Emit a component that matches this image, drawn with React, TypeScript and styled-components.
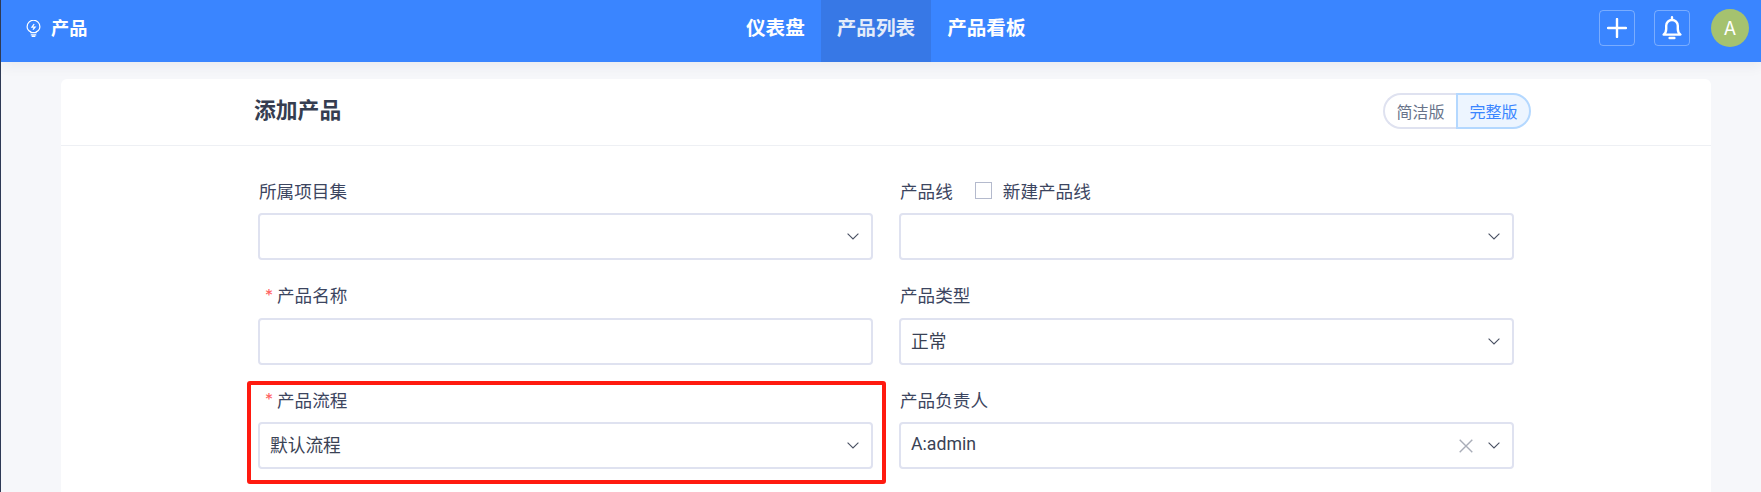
import React from 'react';
import styled, { createGlobalStyle } from 'styled-components';

const Global = createGlobalStyle`
  html, body { margin: 0; padding: 0; height: 100%; overflow: hidden; background: #f5f7fa; }
  body { font-family: Inter, "Noto Sans CJK SC", sans-serif; }
  #root { height: 100%; }
`;

const Page = styled.div`
  height: 492px;
  border-left: 1px solid #2e3a55;
  background: #f6f7fa;
  overflow: hidden;
`;

const TopBar = styled.header`
  height: 62px;
  background: #3a85ff;
  display: flex;
  align-items: stretch;
  color: #fff;
  box-shadow: 0 2px 14px rgba(40, 50, 80, 0.08);
  position: relative;
`;

const Brand = styled.div`
  width: 729px;
  padding-left: 25px;
  box-sizing: border-box;
  display: flex;
  align-items: center;
  gap: 10px;
  font-size: 18.2px;
  font-weight: 700;
  padding-bottom: 8px;
`;

const BrandIcon = styled.svg`
  margin-top: 3px;
`;

const Nav = styled.nav`
  display: flex;
  flex: 1;
`;

const NavItem = styled.div<{ $active?: boolean }>`
  padding: 0 16px 9px;
  display: flex;
  align-items: center;
  font-size: 19.6px;
  font-weight: 700;
  background: ${(p) => (p.$active ? '#3778e6' : 'transparent')};
  color: ${(p) => (p.$active ? '#e4ecfa' : '#fff')};
`;

const Actions = styled.div`
  display: flex;
  align-items: center;
  padding: 0 12px 6px 0;
`;

const IconButton = styled.button`
  width: 36px;
  height: 36px;
  box-sizing: border-box;
  padding: 0;
  margin-right: 19px;
  border: 1px solid rgba(255, 255, 255, 0.32);
  border-radius: 4px;
  background: transparent;
  color: #fff;
  display: flex;
  align-items: center;
  justify-content: center;
`;

const Avatar = styled.div`
  width: 38px;
  height: 38px;
  margin-left: 2px;
  border-radius: 50%;
  background: #a5c26f;
  color: #fff;
  display: flex;
  align-items: center;
  justify-content: center;
  font-size: 18px;
`;

const Card = styled.main`
  margin: 17px 50px 0 60px;
  background: #fff;
  border-radius: 6px 6px 0 0;
  height: 430px;
`;

const CardHead = styled.div`
  height: 67px;
  box-sizing: border-box;
  border-bottom: 1px solid #eef0f4;
  padding: 0 180px 0 193px;
  display: flex;
  align-items: center;
  justify-content: space-between;
`;

const Title = styled.h1`
  margin: -8px 0 0;
  font-size: 21.8px;
  font-weight: 700;
  color: #353d50;
`;

const Toggle = styled.div`
  display: flex;
  height: 36px;
  margin-top: -2px;
`;

const ToggleButton = styled.div<{ $on?: boolean; $side: 'l' | 'r' }>`
  box-sizing: border-box;
  width: ${(p) => (p.$side === 'l' ? 73 : 75)}px;
  display: flex;
  align-items: center;
  justify-content: center;
  font-size: 16px;
  color: ${(p) => (p.$on ? '#3a85ff' : '#68738a')};
  background: ${(p) => (p.$on ? '#edf5ff' : '#fff')};
  border: 2px solid ${(p) => (p.$on ? '#b4d8ff' : '#dfe2f0')};
  border-right-width: ${(p) => (p.$side === 'l' ? 0 : 2)}px;
  border-radius: ${(p) => (p.$side === 'l' ? '18px 0 0 18px' : '0 18px 18px 0')};
`;

const Form = styled.div`
  display: grid;
  grid-template-columns: 615px 615px;
  column-gap: 26px;
  row-gap: 20.5px;
  padding: 30px 0 0 197px;
`;

const Field = styled.div`
  min-width: 0;
`;

const Label = styled.div<{ $required?: boolean }>`
  height: 30px;
  margin-bottom: 7px;
  margin-top: -1px;
  padding-bottom: 1px;
  display: flex;
  align-items: center;
  padding-left: ${(p) => (p.$required ? 7 : 1)}px;
  font-size: 17.6px;
  color: #3c4560;
`;

const Star = styled.span`
  color: #ff5f5f;
  margin-right: 4px;
  font-size: 16px;
`;

const Check = styled.span`
  width: 17px;
  height: 17px;
  box-sizing: border-box;
  border: 1px solid #b4bacd;
  margin: 0 11px 0 22px;
`;

const Control = styled.div`
  height: 47px;
  box-sizing: border-box;
  border: 2px solid #dfe2f0;
  border-radius: 4px;
  display: flex;
  align-items: center;
  padding: 0 12px 0 10px;
  background: #fff;
`;

const Value = styled.span`
  flex: 1;
  font-family: Roboto, "Noto Sans CJK SC", sans-serif;
  font-size: 17.7px;
  color: #3a4254;
  padding-bottom: 3px;
`;

const Clear = styled.svg`
  margin-right: 15px;
`;

const Overlay = styled.div`
  position: absolute;
  left: 247px;
  top: 381px;
  width: 639px;
  height: 103px;
  box-sizing: border-box;
  border: 4px solid #ff1a10;
  border-radius: 3px;
  pointer-events: none;
`;

const Chevron = () => (
  <svg width="12" height="7" viewBox="0 0 12 7" fill="none" stroke="#4a5163" strokeWidth="1.1">
    <path d="M.6.6 6 6 11.4.6" />
  </svg>
);

const Select = ({ value, clearable }: { value?: string; clearable?: boolean }) => (
  <Control>
    <Value>{value}</Value>
    {clearable && (
      <Clear width="14" height="14" viewBox="0 0 14 14" fill="none" stroke="#a9adb8" strokeWidth="1.4">
        <path d="M.7.7l12.6 12.6M13.3.7.7 13.3" />
      </Clear>
    )}
    <Chevron />
  </Control>
);

export default function App() {
  return (
    <Page>
      <Global />
      <TopBar>
        <Brand>
          <BrandIcon width="15" height="17" viewBox="0 0 16 18" fill="none" stroke="#fff" strokeWidth="1.3">
            <path d="M5.2 12.6C3 11.5 1.2 9.6 1.2 7a6.8 6.8 0 0 1 13.6 0c0 2.6-1.8 4.5-4 5.6v.9H5.2z" />
            <path d="M5.6 15.9h4.8M6.6 17.4h2.8" strokeLinecap="round" />
            <path d="M8.7 4.2 6.4 7.6h3.2L7.4 10.2" strokeWidth="1.4" />
          </BrandIcon>
          产品
        </Brand>
        <Nav>
          <NavItem>仪表盘</NavItem>
          <NavItem $active>产品列表</NavItem>
          <NavItem>产品看板</NavItem>
        </Nav>
        <Actions>
          <IconButton aria-label="add">
            <svg width="20" height="20" viewBox="0 0 20 20" stroke="#fff" strokeWidth="2.4" strokeLinecap="round">
              <path d="M10 1v18M1 10h18" />
            </svg>
          </IconButton>
          <IconButton aria-label="notifications">
            <svg width="20" height="24" viewBox="0 0 20 24" fill="none" stroke="#fff" strokeWidth="2.4">
              <path d="M1.6 18.6Q4.2 16.5 4.2 13V9.8a5.8 5.8 0 0 1 11.6 0V13q0 3.5 2.6 5.6z" strokeLinejoin="round" />
              <path d="M10 1.2v2.6M7.6 22h4.8" strokeLinecap="round" />
            </svg>
          </IconButton>
          <Avatar>A</Avatar>
        </Actions>
      </TopBar>
      <Card>
        <CardHead>
          <Title>添加产品</Title>
          <Toggle>
            <ToggleButton $side="l">简洁版</ToggleButton>
            <ToggleButton $side="r" $on>完整版</ToggleButton>
          </Toggle>
        </CardHead>
        <Form>
          <Field>
            <Label>所属项目集</Label>
            <Select />
          </Field>
          <Field>
            <Label>产品线<Check />新建产品线</Label>
            <Select />
          </Field>
          <Field>
            <Label $required><Star>*</Star>产品名称</Label>
            <Control />
          </Field>
          <Field>
            <Label>产品类型</Label>
            <Select value="正常" />
          </Field>
          <Field>
            <Label $required><Star>*</Star>产品流程</Label>
            <Select value="默认流程" />
          </Field>
          <Field>
            <Label>产品负责人</Label>
            <Select value="A:admin" clearable />
          </Field>
        </Form>
      </Card>
      <Overlay />
    </Page>
  );
}
